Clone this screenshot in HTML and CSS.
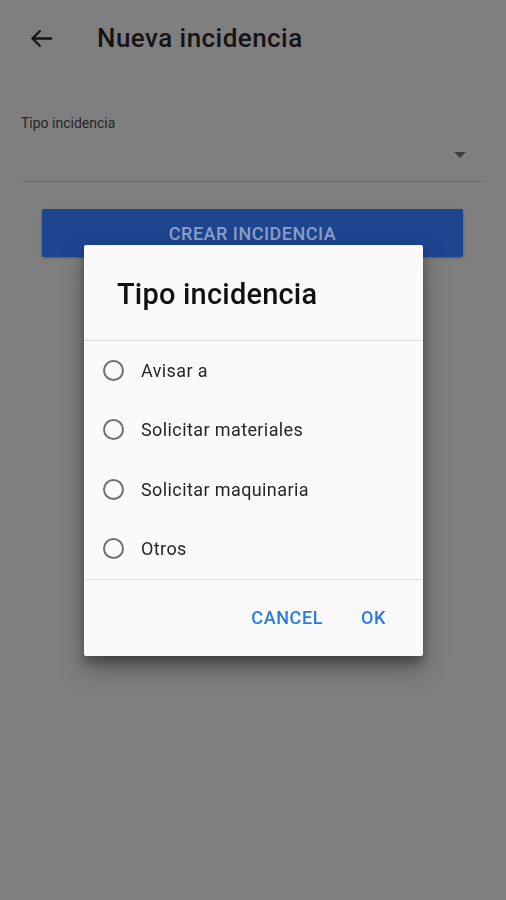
FILE: index.html
```html
<!DOCTYPE html>
<html lang="es">
<head>
<meta charset="utf-8">
<title>Nueva incidencia</title>
<link rel="stylesheet" href="styles.css">
</head>
<body>
<div class="app">
  <header class="toolbar">
    <svg class="back" width="31" height="31" viewBox="0 0 31 31"><path d="M26 15.5H6.5M14.5 7.5L6.5 15.5L14.5 23.5" fill="none" stroke="#141414" stroke-width="2.3"/></svg>
    <h1 class="title">Nueva incidencia</h1>
  </header>
  <main class="form">
    <label class="field-label">Tipo incidencia</label>
    <div class="select">
      <span class="caret"></span>
    </div>
    <button class="primary">CREAR INCIDENCIA</button>
  </main>
</div>
<div class="overlay">
  <div class="dialog">
    <h2 class="dialog-title">Tipo incidencia</h2>
    <ul class="options">
      <li class="option"><span class="radio"></span><span>Avisar a</span></li>
      <li class="option"><span class="radio"></span><span>Solicitar materiales</span></li>
      <li class="option"><span class="radio"></span><span>Solicitar maquinaria</span></li>
      <li class="option"><span class="radio"></span><span>Otros</span></li>
    </ul>
    <div class="actions">
      <button class="text-btn">CANCEL</button>
      <button class="text-btn">OK</button>
    </div>
  </div>
</div>
</body>
</html>
```
FILE: styles.css
```css
* { box-sizing: border-box; }
html, body {
  margin: 0;
  padding: 0;
  width: 506px;
  height: 900px;
  background: #7f7f7f;
  font-family: Roboto, "Noto Sans", sans-serif;
  overflow: hidden;
}
.app { width: 506px; height: 900px; }
.toolbar {
  height: 76px;
  display: flex;
  align-items: center;
  padding: 0 0 0 26px;
}
.back { display: block; }
.title {
  margin: 0 0 0 40px;
  font-size: 26px;
  font-weight: 500;
  letter-spacing: 0.45px;
  color: #151515;
}
.form {
  padding: 38px 22px 0 21px;
  display: flex;
  flex-direction: column;
}
.field-label {
  font-size: 14px;
  color: #262626;
  line-height: 18px;
}
.select {
  height: 50px;
  border-bottom: 1px solid #6c6c6c;
  display: flex;
  justify-content: flex-end;
  align-items: center;
  padding: 0 18px 4px 0;
}
.caret {
  width: 0; height: 0;
  border-left: 6px solid transparent;
  border-right: 6px solid transparent;
  border-top: 6px solid #404040;
}
.primary {
  margin: 27px 0 0 21px;
  width: 421px;
  height: 48px;
  border: 0;
  border-radius: 2px;
  background: #1d4590;
  color: #8c9fc6;
  font-family: Roboto, sans-serif;
  font-size: 18px;
  font-weight: 500;
  letter-spacing: 0.5px;
  box-shadow: 0 1px 3px rgba(0,0,0,0.3);
}
.overlay {
  position: fixed;
  inset: 0;
  display: flex;
  align-items: center;
  justify-content: center;
}
.dialog {
  width: 339px;
  height: 411px;
  background: #fafafa;
  border-radius: 2px;
  box-shadow: 0 12px 24px rgba(0,0,0,0.35), 0 6px 10px rgba(0,0,0,0.25);
  display: flex;
  flex-direction: column;
  margin-left: 1px;
}
.dialog-title {
  margin: 0;
  height: 96px;
  border-bottom: 1px solid #dcdcdc;
  padding: 32px 0 0 33px;
  font-size: 29px;
  font-weight: 500;
  letter-spacing: 0.2px;
  line-height: 34px;
  color: #111;
}
.options {
  list-style: none;
  margin: 0;
  padding: 0;
  border-bottom: 1px solid #e0e0e0;
}
.option {
  height: 59.5px;
  display: flex;
  align-items: center;
  padding-left: 19px;
  font-size: 18px;
  letter-spacing: 0.4px;
  color: #262626;
}
.radio {
  width: 21px;
  height: 21px;
  border: 2px solid #707070;
  border-radius: 50%;
  margin-right: 17px;
}
.actions {
  flex: 1;
  display: flex;
  justify-content: flex-end;
  align-items: center;
  padding-right: 37px;
  gap: 38px;
}
.text-btn {
  background: none;
  border: 0;
  padding: 0;
  font-family: Roboto, sans-serif;
  font-size: 18px;
  font-weight: 500;
  letter-spacing: 0.6px;
  color: #2a7be0;
}
```
